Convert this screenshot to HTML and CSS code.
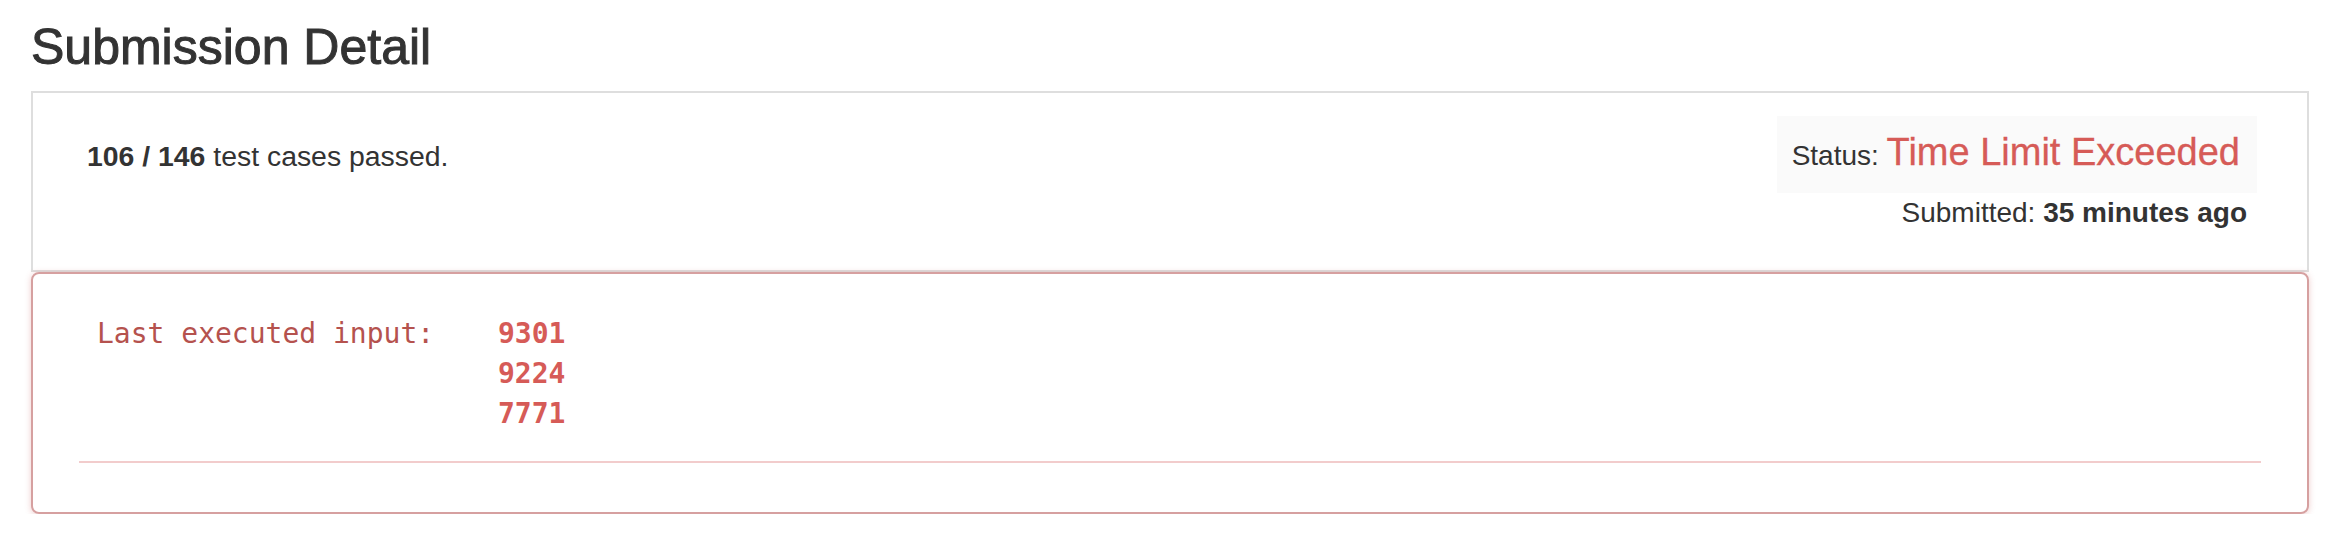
FILE: index.html
```html
<!DOCTYPE html>
<html>
<head>
<meta charset="utf-8">
<link rel="stylesheet" href="styles.css">
</head>
<body>
<div class="page">
  <h1 class="title">Submission Detail</h1>
  <div class="summary-panel">
    <div class="summary-left">
      <b>106 / 146</b> test cases passed.
    </div>
    <div class="summary-right">
      <div class="status-box">Status: <span class="status-text">Time Limit Exceeded</span></div>
      <div class="submitted">Submitted: <b>35 minutes ago</b></div>
    </div>
  </div>
  <div class="error-panel">
    <div class="error-body">
      <div class="error-label">Last executed input:</div>
      <div class="error-values">
        <div>9301</div>
        <div>9224</div>
        <div>7771</div>
      </div>
    </div>
    <div class="error-rule"></div>
  </div>
</div>
</body>
</html>
```

FILE: styles.css
```css
html, body {
  margin: 0;
  padding: 0;
  background: #ffffff;
}

body {
  font-family: "Liberation Sans", Arial, Helvetica, sans-serif;
  font-size: 28px;
  line-height: 40px;
  color: #333333;
}

.page {
  padding: 20px 39px 0 31px;
}

.title {
  margin: 0 0 17px 0;
  font-size: 50px;
  line-height: 54px;
  font-weight: normal;
  color: #333333;
  -webkit-text-stroke: 1px #333333;
}

.summary-panel {
  border: 2px solid #dedede;
  display: flex;
  justify-content: space-between;
  align-items: flex-start;
  padding: 23px 50px 38px 54px;
  height: 116px;
}

.summary-left {
  margin-top: 20px;
  font-size: 28.4px;
}

.summary-left b {
  font-weight: bold;
}

.summary-right {
  display: flex;
  flex-direction: column;
  align-items: flex-end;
}

.status-box {
  background: #fafafa;
  padding: 16px 17px 17px 15px;
  line-height: 40px;
}

.status-text {
  color: #d65b57;
  font-size: 38px;
  -webkit-text-stroke: 0.3px #d65b57;
}

.submitted {
  margin-right: 10px;
  line-height: 40px;
}

.error-panel {
  border: 2px solid #d6a0a0;
  border-radius: 8px;
  box-shadow: 0 1px 6px rgba(200, 90, 90, 0.3);
  padding: 40px 46px 49px 46px;
}

.error-body {
  display: flex;
  padding-left: 18px;
  font-family: "DejaVu Sans Mono", "Liberation Mono", monospace;
  font-size: 28px;
  line-height: 40px;
}

.error-label {
  width: 401px;
  color: #b5524e;
}

.error-values {
  color: #d65b57;
  font-weight: bold;
}

.error-rule {
  margin-top: 27px;
  height: 2px;
  background: #f2cccc;
}
```
